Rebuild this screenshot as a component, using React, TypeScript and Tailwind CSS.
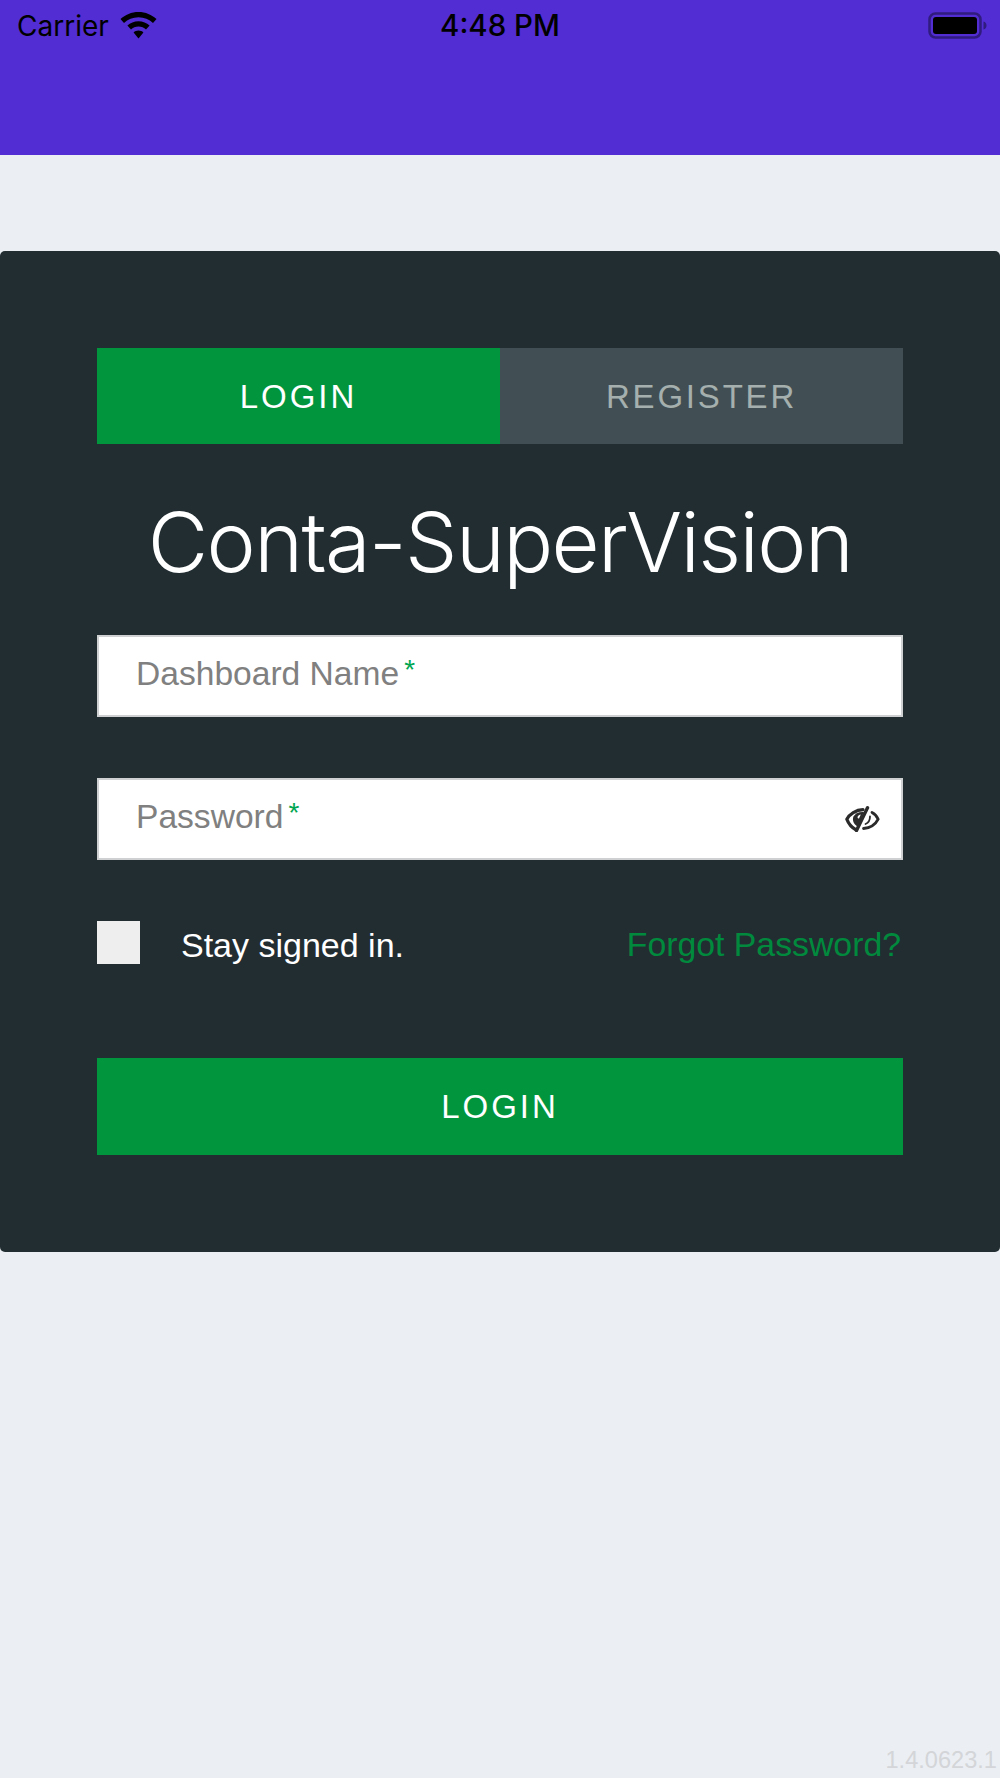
import React from 'react';

const sans = "font-['Liberation_Sans',Arial,sans-serif]";

const WifiIcon = () => (
  <svg width="37" height="28" viewBox="0 0 37 28" fill="#000">
    <path d="M18.500 0C11.500 0 5.200 2.700 0.500 7.100L4 11C7.800 7.500 12.900 5.300 18.500 5.300S29.200 7.500 33 11L36.500 7.100C31.800 2.700 25.500 0 18.500 0Z" />
    <path d="M18.500 9.200C14.200 9.200 10.300 10.900 7.400 13.600L11 17.500C12.900 15.700 15.600 14.600 18.500 14.600S24.100 15.700 26 17.500L29.600 13.600C26.700 10.900 22.800 9.200 18.500 9.200Z" />
    <path d="M18.500 18.500C16.600 18.500 14.900 19.200 13.600 20.400L18.500 26.500L23.400 20.400C22.100 19.200 20.400 18.500 18.500 18.500Z" />
  </svg>
);

const BatteryIcon = () => (
  <svg width="60" height="28" viewBox="0 0 60 28">
    <rect x="1.500" y="1.500" width="51" height="24" rx="6" fill="none" stroke="#000" strokeOpacity="0.4" strokeWidth="2.500" />
    <rect x="5" y="5" width="44" height="17" rx="3" fill="#000" />
    <path d="M55.500 9.500C57.500 10 58.500 11.500 58.500 13.500S57.500 17 55.500 17.500Z" fill="#000" fillOpacity="0.4" />
  </svg>
);

const EyeOffIcon = () => (
  <svg width="35" height="26" viewBox="0 0 35 26" fill="none" stroke="#2b2b2b" strokeLinecap="round" strokeLinejoin="round">
    <path d="M10.500 23.500C6.500 21.500 3.500 17.500 1.800 13.200C4.500 8 11 3.800 18 3.600" strokeWidth="3.200" />
    <path d="M22.500 1.800L11.500 24.500" strokeWidth="3.400" />
    <path d="M12.500 20.500C8.500 18 7 14 8.500 10.500C10 7.500 14 5.500 19 6Z" fill="#2b2b2b" stroke="none" />
    <path d="M27 6.500C30 8 32 10.500 33.200 13.200C30.500 18.500 25.500 22 18.500 22.500" strokeWidth="2.800" />
    <path d="M25 10.500C25 14 23 17 20.500 18" strokeWidth="1.800" />
    <path d="M12.500 11C13 9.500 14.500 8.500 15.800 8.500L14 12.500C13.200 12.500 12.500 12 12.500 11Z" fill="#fff" stroke="none" />
  </svg>
);

const Field = ({ label, icon }: { label: string; icon?: boolean }) => (
  <div className="flex h-[82px] items-center justify-between border-2 border-[#cfd0d1] bg-white pl-[37px] pr-[21px]">
    <span className={`${sans} relative top-[-2px] text-[33.6px] leading-none text-[#808080]`}>
      {label}
      <span className="relative top-[-6px] ml-[5px] text-[28px] text-[#00a651]">*</span>
    </span>
    {icon && <EyeOffIcon />}
  </div>
);

export default function App() {
  return (
    <div className="flex min-h-[1778px] flex-col bg-[#ebeef3]">
      <header className="h-[155px] shrink-0 bg-[#512dd3]">
        <div className="grid h-[52px] grid-cols-3 items-center pl-[17px] pr-[12px]">
          <div className="flex items-center gap-[11px]">
            <span className="font-['Inter',sans-serif] text-[28px] leading-none text-black">Carrier</span>
            <WifiIcon />
          </div>
          <div className="whitespace-nowrap pr-[5px] text-center font-['Inter',sans-serif] text-[29.5px] font-medium leading-none text-black">4:48 PM</div>
          <div className="flex justify-end">
            <BatteryIcon />
          </div>
        </div>
      </header>

      <main className="mt-[96px] h-[1001px] rounded-[5px] bg-[#222d32] px-[97px] pt-[97px]">
        <div className="grid grid-cols-2">
          <div className={`${sans} flex h-[96px] items-center justify-center bg-[#01963e] pt-[2px] text-[33px] tracking-[3px] text-white`}>LOGIN</div>
          <div className={`${sans} flex h-[96px] items-center justify-center bg-[#414f54] pt-[2px] text-[33px] tracking-[2.800px] text-[#a5b0ae]`}>REGISTER</div>
        </div>

        <h1 className="mt-[51px] h-[94px] text-center font-['Inter',sans-serif] text-[83px] font-light leading-[94px] tracking-[-1.600px] text-white">Conta-SuperVision</h1>

        <div className="mt-[46px] flex flex-col gap-[61px]">
          <Field label="Dashboard Name" />
          <Field label="Password" icon />
        </div>

        <div className="mt-[60px] flex h-[44px] items-center">
          <div className="h-[43px] w-[43px] bg-[#eeeeee]" />
          <span className={`${sans} relative top-[3px] ml-[41px] text-[34px] leading-none text-white`}>Stay signed in.</span>
          <span className={`${sans} relative top-[3px] ml-auto mr-[2px] text-[33.8px] leading-none text-[#018a3d]`}>Forgot Password?</span>
        </div>

        <div className={`${sans} mt-[94px] flex h-[97px] items-center justify-center bg-[#01963e] text-[33px] tracking-[3px] text-white`}>LOGIN</div>
      </main>

      <footer className="mt-auto flex justify-end pb-[4px] pr-[3px]">
        <span className={`${sans} text-[23.6px] leading-[28px] text-[#d3d5d8]`}>1.4.0623.1</span>
      </footer>
    </div>
  );
}
